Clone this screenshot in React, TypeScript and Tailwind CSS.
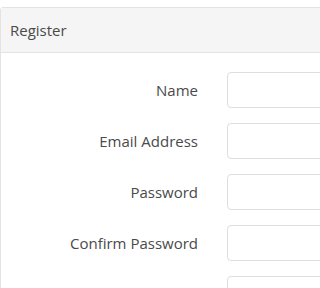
const FIELDS = ["Name", "Email Address", "Password", "Confirm Password", ""];

export default function App() {
  return (
    <div className="w-full h-screen overflow-hidden bg-white pt-[7px] font-['Open_Sans',sans-serif]">
      <div className="w-[600px] border border-[#e3e3e3] rounded-[3px]">
        <div className="h-[45px] flex items-center px-[9px] bg-[#f5f5f5] border-b border-[#e3e3e3] text-[15px] text-[#4a4a4a]">
          Register
        </div>
        <div className="flex flex-col gap-[15px] pt-[19px]">
          {FIELDS.map((f, i) => (
            <div key={i} className="flex items-center gap-[29px]">
              <label className="w-[197px] text-right text-[15px] text-[#4a4a4a]">{f}</label>
              <input className="h-[36px] w-[300px] border border-[#dedede] rounded-[4px] bg-white" />
            </div>
          ))}
        </div>
      </div>
    </div>
  );
}
